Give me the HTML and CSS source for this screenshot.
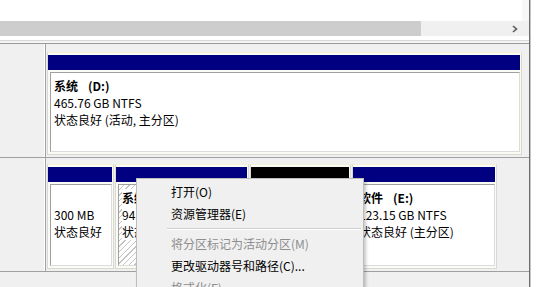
FILE: index.html
```html
<!DOCTYPE html>
<html lang="zh-CN">
<head>
  <meta charset="UTF-8">
  <title>磁盘管理</title>
  <link rel="stylesheet" href="styles.css">
</head>
<body>
  <div class="screen">
    <div class="console">
      <div class="volume-list"></div>
      <div class="hscroll">
        <div class="thumb"></div>
        <div class="track">
          <svg class="arrow" width="6" height="8" viewBox="0 0 6 8">
            <polyline points="1,1 4.5,4 1,7" fill="none" stroke="#5a5a5a" stroke-width="1.6"/>
          </svg>
        </div>
      </div>
      <div class="pane-split"></div>
      <div class="pane-edge"></div>

      <div class="disk disk-one">
        <div class="disk-label"></div>
        <div class="parts">
          <div class="part part-d">
            <div class="part-head"></div>
            <div class="part-body">
              <p class="name">系统<span class="letter">(D:)</span></p>
              <p>465.76 GB NTFS</p>
              <p>状态良好 (活动, 主分区)</p>
            </div>
          </div>
        </div>
      </div>

      <div class="disk disk-two">
        <div class="disk-label"></div>
        <div class="parts">
          <div class="part part-recovery">
            <div class="part-head"></div>
            <div class="part-body">
              <p class="name">&nbsp;</p>
              <p>300 MB</p>
              <p>状态良好</p>
            </div>
          </div>
          <div class="part part-system">
            <div class="part-head"></div>
            <div class="part-body selected">
              <p class="name"><span>系统<span class="letter">(C:)</span></span></p>
              <p><span>94.66 GB NTFS</span></p>
              <p><span>状态良好 (启动, 页面文件)</span></p>
            </div>
          </div>
          <div class="part part-free">
            <div class="part-head free"></div>
            <div class="part-body">
              <p>&nbsp;</p>
            </div>
          </div>
          <div class="part part-e">
            <div class="part-head"></div>
            <div class="part-body">
              <p class="name">软件<span class="letter">(E:)</span></p>
              <p>123.15 GB NTFS</p>
              <p>状态良好 (主分区)</p>
            </div>
          </div>
        </div>
      </div>
      <div class="filler"></div>
    </div>
    <div class="edge"></div>
    <div class="outside"></div>

    <div class="menu">
      <div class="item">打开(O)</div>
      <div class="item">资源管理器(E)</div>
      <div class="sep"></div>
      <div class="item off">将分区标记为活动分区(M)</div>
      <div class="item">更改驱动器号和路径(C)...</div>
      <div class="item off">格式化(F)...</div>
    </div>
  </div>
</body>
</html>
```

FILE: styles.css
```css
body {
  margin: 0;
  width: 543px;
  height: 287px;
  overflow: hidden;
  background: #fff;
  color: #000;
  font-family: "Noto Sans CJK SC", "Noto Sans", sans-serif;
  font-size: 12px;
}

.screen {
  position: relative;
  display: flex;
  height: 287px;
}

.console {
  width: 529px;
  display: flex;
  flex-direction: column;
  background: #f0f0f0;
}

.edge {
  width: 1px;
  background: #6e6e6e;
  border-right: 1px solid #c4c4c4;
}

.outside {
  flex: 1;
  background: #fff;
}

/* top list + its scrollbar */
.volume-list {
  height: 21px;
  background: #fff;
  border-right: 7px solid #f7f7f7;
}

.hscroll {
  height: 15px;
  display: flex;
}

.thumb {
  width: 421px;
  background: #cdcdcd;
}

.track {
  flex: 1;
  background: #f0f0f0;
  display: flex;
  align-items: center;
  justify-content: flex-end;
  padding-right: 11px;
}

.pane-split {
  height: 4px;
  background: #fff;
  border-bottom: 1px solid #d6d6d6;
}

.pane-edge {
  height: 2px;
  background: #f4f4f4;
  border-bottom: 1px solid #9c9c9c;
}

/* disk rows */
.disk {
  display: flex;
  border-bottom: 1px solid #a0a0a0;
}

.disk-label {
  width: 44px;
  background: #f0f0f0;
  border-right: 1px solid #fff;
  box-shadow: 1px 0 0 #a0a0a0;
}

.parts {
  flex: 1;
  display: flex;
  gap: 1px;
  padding: 0 0 2px 2px;
}

.disk-one .parts {
  padding-top: 8px;
}

.disk-one .part {
  height: 103px;
}

.disk-two .parts {
  padding-top: 6px;
}

.disk-two .part {
  height: 105px;
}

.part {
  box-sizing: border-box;
  display: flex;
  flex-direction: column;
  background: #fbfbf6;
  border: 1px solid #d9d9d2;
  border-top-color: #f3f0d8;
  padding: 2px 1px 2px 0;
}

.part-d { width: 475px; }
.part-recovery { width: 67px; }
.part-system { width: 134px; }
.part-free { width: 101px; }
.part-e { width: 145px; }

.part-head {
  height: 15px;
  background: #000080;
}

.part-head.free {
  background: #000;
}

.part-body {
  flex: 1;
  margin: 2px 0 0 2px;
  padding: 4px 3px 0;
  background: #fff;
  border: 1px solid #a0a0a0;
  border-right-color: #dcdcdc;
  border-bottom-color: #dcdcdc;
  overflow: hidden;
  white-space: nowrap;
}

.part-body p {
  margin: 0;
  line-height: 17px;
}

.part-body .name {
  font-weight: 700;
}

.letter {
  margin-left: 10px;
}

.selected {
  background: repeating-linear-gradient(135deg, #fff 0, #fff 3px, #c4c4c4 3px, #c4c4c4 4px);
}

.selected p span {
  background: #fff;
}

.filler {
  flex: 1;
  background: #f0f0f0;
}

/* context menu */
.menu {
  position: absolute;
  left: 136px;
  top: 178px;
  width: 228px;
  box-sizing: border-box;
  padding: 2px 2px 0 0;
  background: #f0f0f0;
  border: 1px solid #bdbdbd;
  box-shadow: 2px 2px 3px rgba(0, 0, 0, 0.22);
}

.item {
  height: 22px;
  line-height: 22px;
  padding-left: 34px;
  white-space: nowrap;
}

.item.off {
  color: #8e8e8e;
}

.sep {
  height: 1px;
  margin: 3px 0 3px 30px;
  background: #cfcfcf;
  border-bottom: 1px solid #fff;
}
```
